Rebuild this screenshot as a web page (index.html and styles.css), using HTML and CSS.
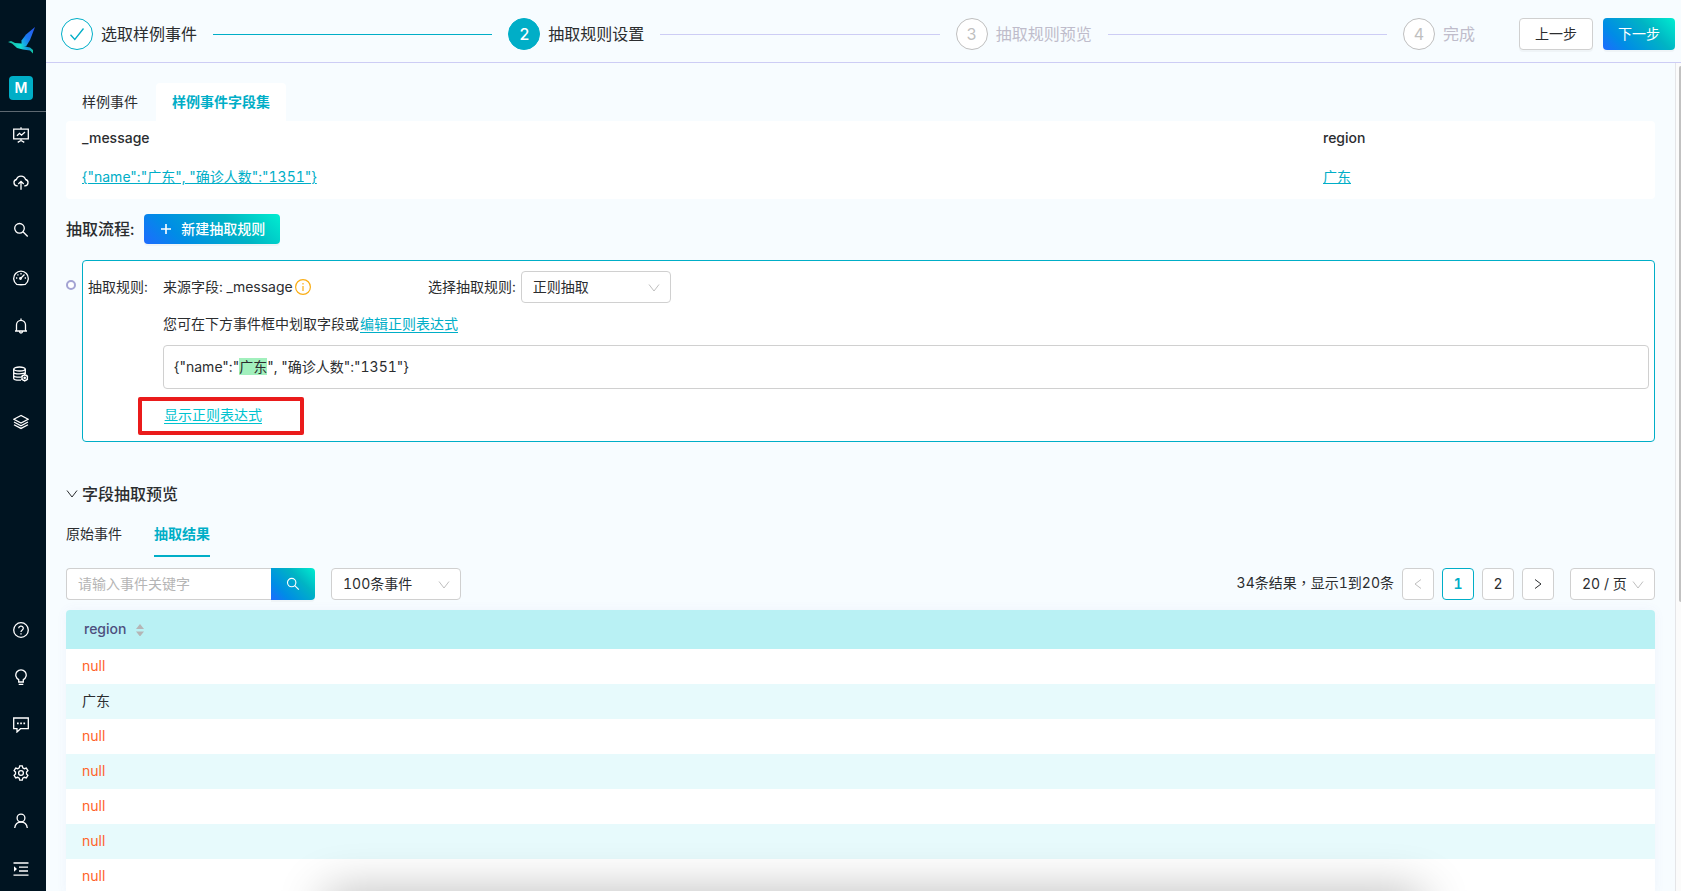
FILE: index.html
```
<!DOCTYPE html>
<html lang="zh-CN">
<head>
<meta charset="utf-8">
<title>抽取规则设置</title>
<link rel="stylesheet" href="styles.css">
</head>
<body>
<div class="app">
  <nav class="sidebar" aria-label="主导航">
    <svg class="logo" viewBox="0 0 28 28" aria-hidden="true">
      <defs>
        <linearGradient id="wing" x1="1" y1="0" x2="0" y2="1"><stop offset="0" stop-color="#2a55f0"/><stop offset=".6" stop-color="#1a7cf0"/><stop offset="1" stop-color="#14d0e0"/></linearGradient>
        <linearGradient id="body" x1="0" y1="0" x2="1" y2="0"><stop offset="0" stop-color="#16b8a0"/><stop offset=".5" stop-color="#14dcd0"/><stop offset=".8" stop-color="#1490e0"/><stop offset="1" stop-color="#12c99a"/></linearGradient>
      </defs>
      <path d="M27 0 18 7.500 13.500 13.500 13.500 19 18 19.500 22 13Z" fill="url(#wing)"/>
      <path d="M0 15 3 14 7 16 13.500 16.500 17 19.500 22 20.500 25 23 25 26.500 22 23.500 15 22.500 9 21 4 16.500Z" fill="url(#body)"/>
    </svg>
    <a class="team" href="#">M</a>
    <div class="group">
      <a href="#" aria-label="仪表"><svg viewBox="0 0 16 16"><path d="M.7 2.200h14.600v9.600H.7zM8 .3v1.900M8 11.800v1.700M4.700 15.400 8 13.500l3.300 1.900M4 8.800l2.500-2.500 2 1.900L12 5"/></svg></a>
      <a href="#" aria-label="上传"><svg viewBox="0 0 16 16"><path d="M4.800 11.800H4a3.200 3.200 0 0 1-.6-6.300 4.800 4.800 0 0 1 9.200 0 3.200 3.200 0 0 1-.6 6.300h-.8M8 15.800V7.500M5.300 10 8 7.300 10.700 10"/></svg></a>
      <a href="#" aria-label="搜索"><svg viewBox="0 0 16 16"><circle cx="6.500" cy="6.300" r="4.800"/><path d="m10 9.800 4.700 4.700"/></svg></a>
      <a href="#" aria-label="监控"><svg viewBox="0 0 16 16"><path d="M3.600 14.300A7.300 7.300 0 1 1 12.400 14.300Q8 15.200 3.600 14.300ZM8 3v1.500M3 8h1.300M11.700 8H13M4.500 4.500l.9.900M7.500 8.500l4-4"/><circle cx="7.500" cy="8.500" r=".8"/></svg></a>
      <a href="#" aria-label="告警"><svg viewBox="0 0 16 16"><path d="M2 13h12M3.500 13V6.800a4.500 4.500 0 0 1 9 0V13M8 2.200V.6M6.500 13.500a1.500 1.500 0 0 0 3 0"/></svg></a>
      <a href="#" aria-label="数据"><svg viewBox="0 0 16 16"><ellipse cx="6.500" cy="3" rx="5.800" ry="2"/><path d="M.7 3v9.500c0 1 3 1.700 5.800 1.700h1.500M12.300 3v5M.7 6.200c0 1 3 1.700 5.800 1.700s5.800-.7 5.800-1.700M.7 9.400c0 1 3 1.700 5.800 1.700h1.800"/><circle cx="11.700" cy="11.800" r="2.800"/><circle cx="11.700" cy="11.800" r=".7"/><path d="M11.700 8v1M11.700 14.600v1M8.300 10l1 .6M14 13l1 .6M8.300 13.600l1-.6M14 10.600l1-.6"/></svg></a>
      <a href="#" aria-label="应用"><svg viewBox="0 0 16 16"><path d="M8 1.500.8 5.200 8 9l7.200-3.800ZM1 8l7 3.700L15 8M1 10.700l7 3.700 7-3.700"/></svg></a>
    </div>
    <div class="group bottom">
      <a href="#" aria-label="帮助"><svg viewBox="0 0 16 16"><circle cx="8" cy="8" r="7.300"/><path d="M5.700 6.300a2.300 2.200 0 1 1 3.400 1.900C8.300 8.700 8 9 8 9.900M8 11.200v1.300"/></svg></a>
      <a href="#" aria-label="提示"><svg viewBox="0 0 16 16"><path d="M5.700 13v-2.300a5.200 5.200 0 1 1 4.600 0V13ZM5.700 15.400h4.600"/></svg></a>
      <a href="#" aria-label="消息"><svg viewBox="0 0 16 16"><path d="M.7 1h14.600v10.700H7.500L4 15v-3.300H.7z"/><path class="dots" d="M4 5.500h1.700v1.700H4zM7.200 5.500h1.700v1.700H7.200zM10.400 5.500h1.700v1.700h-1.700z"/></svg></a>
      <a href="#" aria-label="设置"><svg viewBox="0 0 16 16"><path d="M6.700 .8h2.600l.5 2 1.500.9 2-.6 1.600 2.600-1.400 1.400v1.800l1.400 1.400-1.600 2.600-2-.6-1.500.9-.5 2H6.700l-.5-2-1.500-.9-2 .6-1.600-2.600 1.400-1.400V7.100L1.100 5.700l1.600-2.600 2 .6 1.500-.9Z"/><circle cx="8" cy="8" r="2.400"/></svg></a>
      <a href="#" aria-label="用户"><svg viewBox="0 0 16 16"><circle cx="8" cy="5" r="3.900"/><path d="M1.700 15c.5-3.600 3-6 6.300-6s5.800 2.400 6.300 6"/></svg></a>
      <a href="#" aria-label="展开菜单"><svg viewBox="0 0 16 16"><path d="M.5 2h15M6 6.200h9M6 10h9M.5 14.200h15"/><path class="dots" d="M1 5.300v5.400L4 8z"/></svg></a>
    </div>
  </nav>

  <div class="main">
    <header class="header">
      <ol class="steps">
        <li class="step done"><span class="step-icon"><svg viewBox="0 0 16 16" aria-hidden="true"><path d="m1.500 8.700 4.300 4.800L14.500 2.500"/></svg></span><span>选取样例事件</span></li>
        <li class="step current"><span class="step-icon">2</span><span>抽取规则设置</span></li>
        <li class="step"><span class="step-icon">3</span><span>抽取规则预览</span></li>
        <li class="step"><span class="step-icon">4</span><span>完成</span></li>
      </ol>
      <div class="actions">
        <button class="btn" type="button">上一步</button>
        <button class="btn primary" type="button">下一步</button>
      </div>
    </header>

    <div class="body">
      <main class="content">
        <div class="card-tabs" role="tablist">
          <button type="button" role="tab" aria-selected="false">样例事件</button>
          <button type="button" role="tab" aria-selected="true">样例事件字段集</button>
        </div>
        <table class="fields">
          <thead><tr><th class="wide">_message</th><th>region</th></tr></thead>
          <tbody><tr><td><a href="#">{"name":"广东", "确诊人数":"1351"}</a></td><td><a href="#">广东</a></td></tr></tbody>
        </table>

        <div class="flow-head">
          <h2>抽取流程:</h2>
          <button class="btn primary small" type="button"><svg viewBox="0 0 14 14" aria-hidden="true"><path d="M7 2v10M2 7h10"/></svg>新建抽取规则</button>
        </div>

        <div class="timeline">
          <span class="node"></span>
          <section class="rule">
            <span class="rule-label">抽取规则:</span>
            <div class="rule-body">
              <div class="rule-row">
                <div class="source">来源字段: _message<svg viewBox="0 0 16 16" aria-hidden="true"><circle cx="8" cy="8" r="7.400"/><path d="M8 7v5M8 4v1.500"/></svg></div>
                <label for="rule-type">选择抽取规则:</label>
                <span class="select rule-type"><select id="rule-type"><option>正则抽取</option></select><svg viewBox="0 0 12 12" aria-hidden="true"><path d="m1 2.500 5 6.500 5-6.500"/></svg></span>
              </div>
              <p class="hint">您可在下方事件框中划取字段或<a href="#">编辑正则表达式</a></p>
              <div class="sample">{"name":"<mark>广东</mark>", "确诊人数":"1351"}</div>
              <div class="toggle"><a href="#">显示正则表达式</a></div>
            </div>
          </section>
        </div>

        <h2 class="preview-title"><svg viewBox="0 0 12 12" aria-hidden="true"><path d="m1 2.500 5 6.500 5-6.500"/></svg>字段抽取预览</h2>
        <div class="line-tabs" role="tablist">
          <button type="button" role="tab" aria-selected="false">原始事件</button>
          <button type="button" role="tab" aria-selected="true">抽取结果</button>
        </div>

        <div class="toolbar">
          <div class="search">
            <input type="text" placeholder="请输入事件关键字" aria-label="事件关键字">
            <button class="btn primary" type="button" aria-label="搜索"><svg viewBox="0 0 16 16"><circle cx="6.500" cy="6.300" r="4.800"/><path d="m10 9.800 4.700 4.700"/></svg></button>
          </div>
          <span class="select count"><select aria-label="事件数量"><option>100条事件</option></select><svg viewBox="0 0 12 12" aria-hidden="true"><path d="m1 2.500 5 6.500 5-6.500"/></svg></span>
          <div class="pager">
            <span class="total">34条结果<span class="comma" lang="zh-TW">，</span>显示1到20条</span>
            <button type="button" disabled aria-label="上一页"><svg viewBox="0 0 12 12"><path d="M9 1.500 3 6l6 4.500"/></svg></button>
            <button type="button" class="active">1</button>
            <button type="button">2</button>
            <button type="button" aria-label="下一页"><svg viewBox="0 0 12 12"><path d="m3 1.500 6 4.500-6 4.500"/></svg></button>
            <span class="select size"><select aria-label="每页条数"><option>20 / 页</option></select><svg viewBox="0 0 12 12" aria-hidden="true"><path d="m1 2.500 5 6.500 5-6.500"/></svg></span>
          </div>
        </div>

        <table class="results">
          <thead><tr><th><span class="sort">region<svg viewBox="0 0 8 12" aria-hidden="true"><path d="M0 5 4 0l4 5zM0 7.500h8l-4 5z"/></svg></span></th></tr></thead>
          <tbody>
            <tr><td class="null">null</td></tr>
            <tr><td>广东</td></tr>
            <tr><td class="null">null</td></tr>
            <tr><td class="null">null</td></tr>
            <tr><td class="null">null</td></tr>
            <tr><td class="null">null</td></tr>
            <tr><td class="null">null</td></tr>
          </tbody>
        </table>
      </main>
      <div class="scrollbar" aria-hidden="true"><span></span></div>
    </div>
  </div>
  <div class="dock-shadow" aria-hidden="true"></div>
</div>
</body>
</html>
```
FILE: styles.css
```
* { box-sizing: border-box; }

body {
  margin: 0;
  font: 14px/22px Inter, "Noto Sans CJK SC", sans-serif;
  font-variant-numeric: tabular-nums;
  color: #2b2d2f;
  background: #f7fcff;
}

h2, p, ol { margin: 0; padding: 0; }
button, input, select { font: inherit; font-variant-numeric: inherit; color: inherit; }
a { color: #00aec7; }
svg { fill: none; stroke: currentColor; flex: none; }

.app {
  position: relative;
  display: flex;
  height: 100vh;
  overflow: hidden;
}

/* Sidebar */
.sidebar {
  display: flex;
  flex-direction: column;
  flex: none;
  width: 46px;
  padding-top: 27px;
  background: #001421;
  color: #fff;
}
.logo { width: 28px; height: 28px; margin-left: 8px; stroke: none; }
.team {
  width: 24px;
  height: 24px;
  margin: 21px 0 11px 9px;
  border-radius: 4px;
  background: #00aec7;
  color: #fff;
  font-weight: 600;
  line-height: 24px;
  text-align: center;
  text-decoration: none;
}
.group { border-top: 1px solid #5d6871; }
.group a {
  display: flex;
  align-items: center;
  height: 48px;
  padding-left: 13px;
  color: #fff;
}
.group a:first-child { height: 46px; }
.group svg { width: 16px; height: 16px; stroke-width: 1.3; }
.group .dots { fill: currentColor; stroke: none; }
.group.bottom { margin: auto 0 -2px; border: 0; }

/* Header with steps */
.main { display: flex; flex-direction: column; flex: 1; min-width: 0; }
.header {
  display: flex;
  align-items: center;
  gap: 44px;
  height: 63px;
  padding: 5px 6px 0 15px;
  border-bottom: 1px solid #cdcdf5;
  flex: none;
}
.steps { display: flex; flex: 1; gap: 16px; list-style: none; font-size: 16px; }
.step { display: flex; align-items: center; flex: 1; color: #bfbccb; white-space: nowrap; }
.step:last-child { flex: none; }
.step:not(:last-child)::after {
  content: "";
  flex: 1;
  height: 1px;
  margin: 2px 0 0 16px;
  background: #cdcdf5;
}
.step-icon {
  display: flex;
  align-items: center;
  justify-content: center;
  width: 32px;
  height: 32px;
  margin-right: 8px;
  border: 1px solid #bfbfbf;
  border-radius: 50%;
  background: #fff;
  color: #bfbfbf;
}
.step.done, .step.current { color: #2b2d2f; }
.step.done .step-icon { border-color: #00aec7; color: #00aec7; }
.step.done svg { width: 16px; height: 16px; stroke-width: 1.3; }
.step.done:not(:last-child)::after { background: #00aec7; }
.step.current .step-icon { border-color: #00aec7; background: #00aec7; color: #fff; font-weight: 500; }
.actions { display: flex; gap: 10px; }

.btn {
  display: flex;
  align-items: center;
  justify-content: center;
  gap: 8px;
  height: 32px;
  padding: 0 15px;
  border: 1px solid #d0d0d0;
  border-radius: 4px;
  background: #fff;
  box-shadow: 0 2px 0 rgba(0, 0, 0, .03);
  white-space: nowrap;
}
.btn.primary {
  border: 0;
  background: linear-gradient(45deg, #1f6bff 0%, #008ce6 25%, #00b4c4 65%, #00edd0 100%);
  color: #fff;
}
.btn.small { height: 30px; font-weight: 500; }
.btn svg { width: 14px; height: 14px; stroke-width: 1.6; }

/* Page body */
.body { display: flex; flex: 1; min-height: 0; }
.content { flex: 1; min-width: 0; padding: 20px 20px 0; overflow: hidden; }
.scrollbar { width: 6px; padding: 3px 0 0 3px; border-left: 1px solid #e4e5e8; background: #fbfbfb; }
.scrollbar span { display: block; height: 65%; border-radius: 4px 0 0 4px; background: #c1c1c1; }

.card-tabs { display: flex; }
.card-tabs button {
  height: 38px;
  padding: 0 16px;
  border: 0;
  border-radius: 4px 4px 0 0;
  background: none;
}
.card-tabs [aria-selected="true"], .line-tabs [aria-selected="true"] { color: #00aec7; font-weight: 600; }
.card-tabs [aria-selected="true"] { margin-left: 2px; background: #fff; }

.fields {
  width: 100%;
  table-layout: fixed;
  border-spacing: 0;
  border-radius: 4px;
  background: #fff;
  text-align: left;
}
.fields .wide { width: 78.1%; }
.fields th { height: 34px; padding: 0 16px; font-weight: 500; }
.fields td { height: 44px; padding: 0 16px; }

.flow-head { display: flex; align-items: center; gap: 10px; margin-top: 15px; }
h2 { font-size: 16px; line-height: 24px; font-weight: 500; }

.timeline { display: flex; gap: 6px; margin-top: 16px; }
.node {
  width: 10px;
  height: 10px;
  margin-top: 20px;
  border: 2px solid #a3a3d3;
  border-radius: 50%;
  background: #fff;
  flex: none;
}
.rule {
  display: flex;
  flex: 1;
  min-width: 0;
  padding: 10px 5px 6px;
  border: 1px solid #00aec7;
  border-radius: 4px;
  background: #fff;
}
.rule-label { width: 75px; line-height: 32px; flex: none; }
.rule-body { flex: 1; min-width: 0; }
.rule-row { display: flex; align-items: center; gap: 5px; }
.source { display: flex; align-items: center; gap: 2px; width: 260px; }
.source svg { width: 16px; height: 16px; color: #faad14; stroke-width: 1.2; }

.select { position: relative; display: flex; }
.select select {
  width: 100%;
  height: 32px;
  padding: 0 11px;
  border: 1px solid #d0d0d0;
  border-radius: 4px;
  background: #fff;
  appearance: none;
}
.select svg {
  position: absolute;
  top: 11px;
  right: 11px;
  width: 12px;
  height: 12px;
  color: #bfbfbf;
  pointer-events: none;
}
.rule-type { width: 150px; }
.count { width: 130px; }
.size { width: 85px; margin-left: 8px; }

.hint { margin-top: 10px; }
.hint a, .toggle a { border-bottom: 1px solid; text-decoration: none; }
.hint a { margin-left: 1px; }
.sample {
  margin-top: 10px;
  padding: 10px;
  border: 1px solid #d0d0d0;
  border-radius: 4px;
}
mark { background: #a2f0bd; color: inherit; }
.toggle {
  width: 166px;
  margin: 8px 0 0 -25px;
  padding: 3px 22px 5px;
  border: 4px solid #ea1b1b;
  border-radius: 2px;
}
.toggle a { color: #00c3cf; }

.preview-title { display: flex; align-items: center; gap: 4px; margin-top: 40px; }
.preview-title svg { width: 12px; height: 12px; }
.line-tabs { display: flex; gap: 32px; margin-top: 11px; }
.line-tabs button { height: 40px; padding: 0 0 4px; border: 0; border-bottom: 2px solid transparent; background: none; }
.line-tabs [aria-selected="true"] { border-bottom-color: #00aec7; }

.toolbar { display: flex; align-items: center; gap: 16px; margin-top: 11px; }
.search { display: flex; }
.search input {
  width: 205px;
  height: 32px;
  padding: 0 11px 2px;
  border: 1px solid #d0d0d0;
  border-right: 0;
  border-radius: 4px 0 0 4px;
  background: #fff;
}
.search input::placeholder { color: #b5b5b5; }
.search .btn { width: 44px; padding: 0; border-radius: 0 4px 4px 0; }
.search svg { stroke-width: 1.3; }

.pager { display: flex; align-items: center; gap: 8px; margin-left: auto; }
.total { padding-bottom: 2px; }
.pager button {
  display: flex;
  align-items: center;
  justify-content: center;
  width: 32px;
  height: 32px;
  padding: 0;
  border: 1px solid #d0d0d0;
  border-radius: 4px;
  background: #fff;
}
.pager button:disabled { color: #bfbfbf; }
.pager .active { border-color: #00aec7; color: #00aec7; font-weight: 600; }
.pager svg { width: 12px; height: 12px; }
.comma { font-family: "Noto Sans CJK TC", sans-serif; line-height: 1; }

.results {
  width: 100%;
  margin-top: 10px;
  border-spacing: 0;
  border-radius: 4px 4px 0 0;
  background: #fff;
  box-shadow: 0 0 12px rgba(90, 90, 190, .05);
  text-align: left;
}
.results th {
  height: 39px;
  padding: 0 18px 2px;
  border-radius: 4px 4px 0 0;
  background: #b9f1f4;
  color: #4d4f7d;
  font-weight: 500;
}
.results td { height: 35px; padding: 0 16px 2px; }
.results tr:nth-child(even) td { background: #e7fafc; }
.results .null { color: #ff6229; }
.sort { display: flex; align-items: center; gap: 10px; }
.sort svg { width: 8px; height: 12px; margin-top: 2px; fill: #b5b5b5; stroke: none; }

/* Shade cast by the panel below the window */
.dock-shadow {
  position: absolute;
  right: 16%;
  bottom: -32px;
  left: 20%;
  height: 20px;
  box-shadow: 0 0 48px 10px rgba(0, 0, 0, .3);
  pointer-events: none;
}
```
